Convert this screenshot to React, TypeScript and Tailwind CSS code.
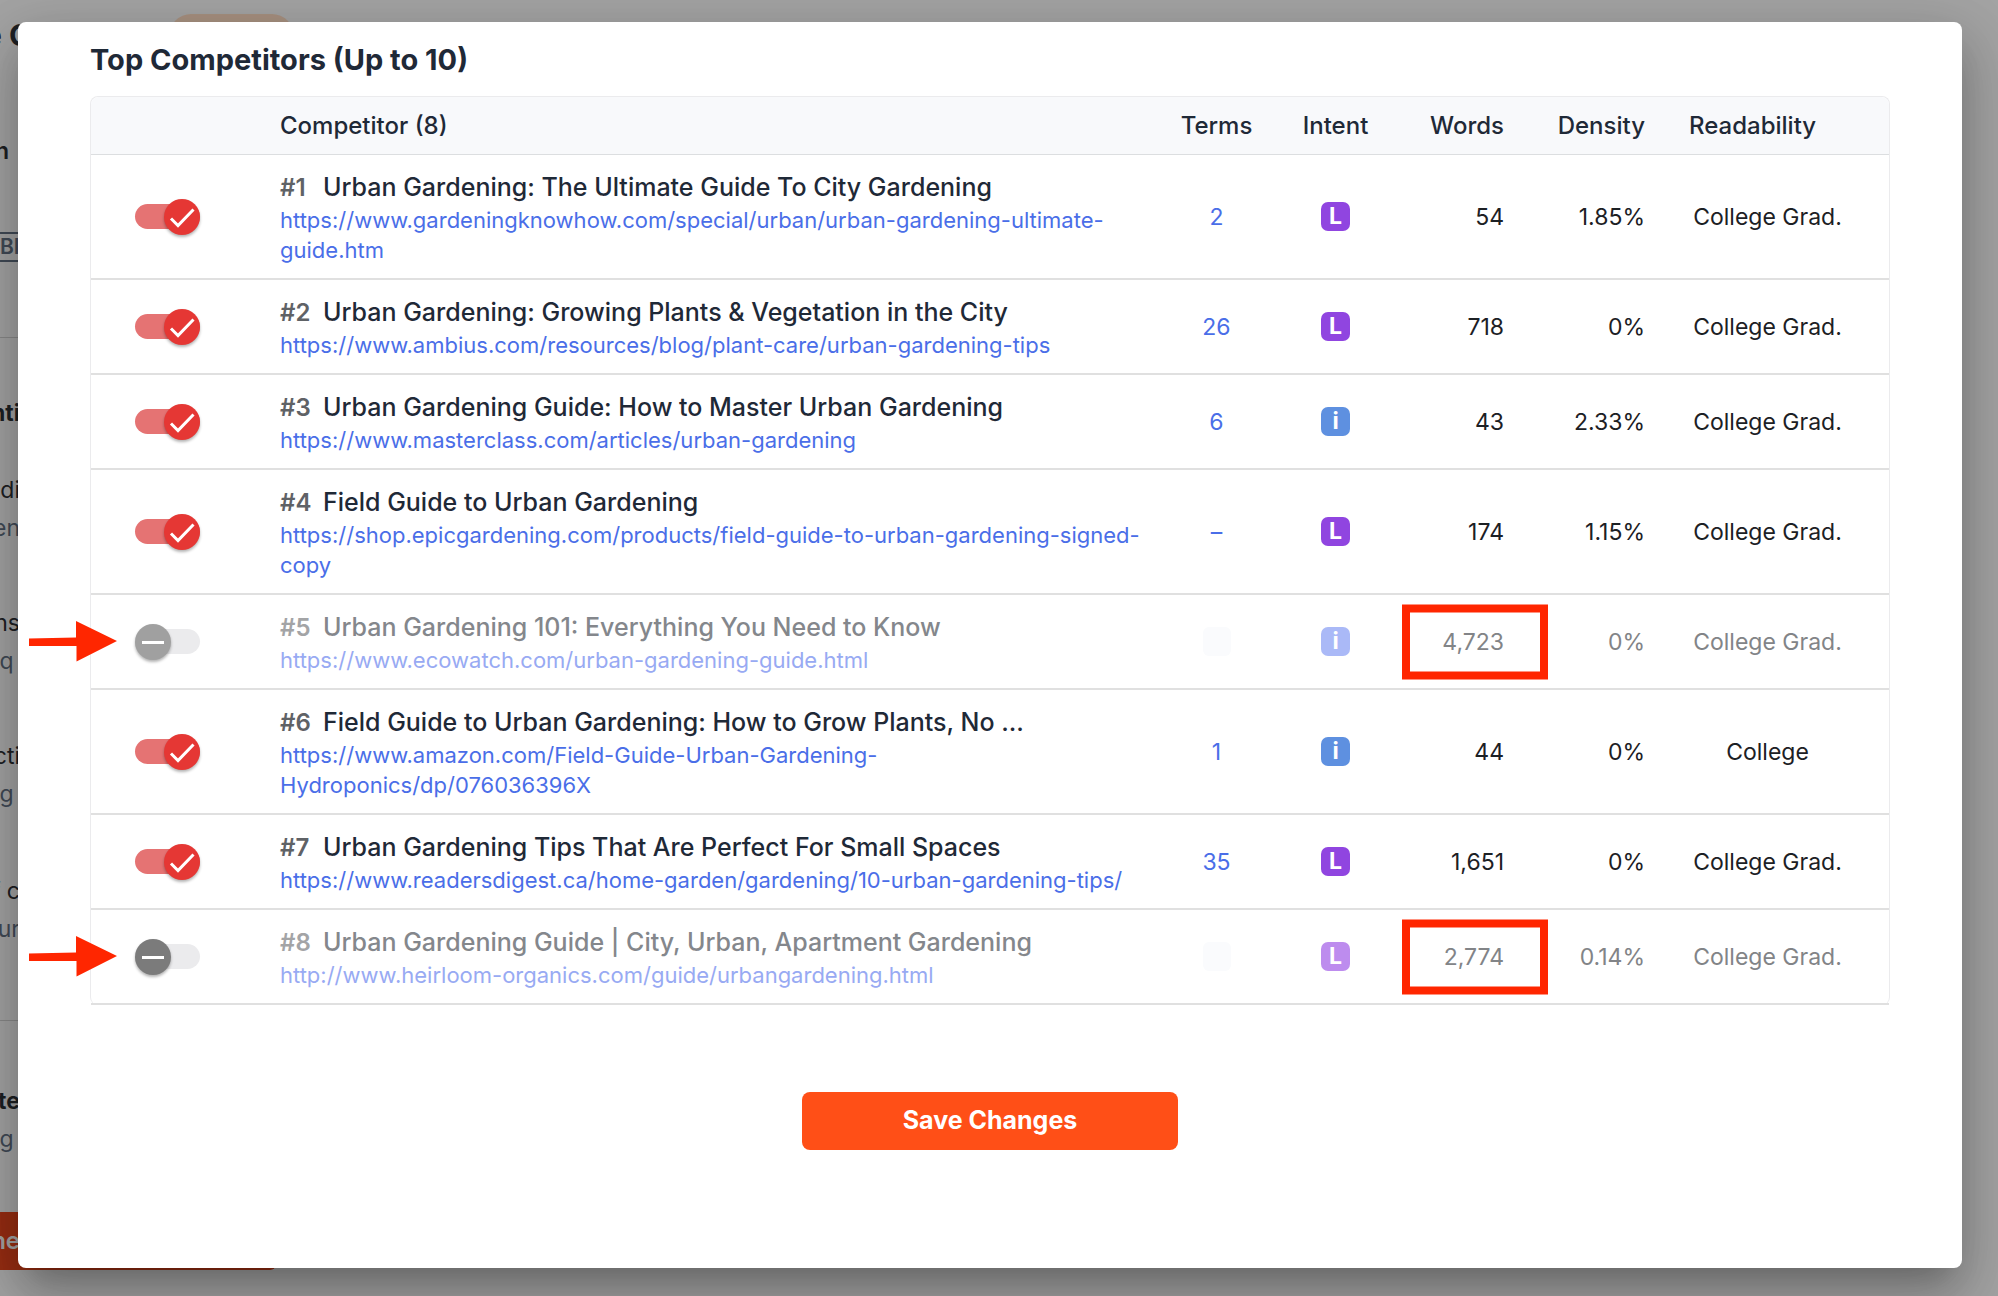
import { useState } from "react";

type Intent = "L" | "i";

interface Competitor {
  title: string;
  url: string;
  terms: string;
  intent: Intent;
  words: string;
  density: string;
  readability: string;
  enabled: boolean;
  marked?: boolean;
  focused?: boolean;
}

const COMPETITORS: Competitor[] = [
  { title: "Urban Gardening: The Ultimate Guide To City Gardening", url: "https://www.gardeningknowhow.com/special/urban/urban-gardening-ultimate-guide.htm", terms: "2", intent: "L", words: "54", density: "1.85%", readability: "College Grad.", enabled: true },
  { title: "Urban Gardening: Growing Plants & Vegetation in the City", url: "https://www.ambius.com/resources/blog/plant-care/urban-gardening-tips", terms: "26", intent: "L", words: "718", density: "0%", readability: "College Grad.", enabled: true },
  { title: "Urban Gardening Guide: How to Master Urban Gardening", url: "https://www.masterclass.com/articles/urban-gardening", terms: "6", intent: "i", words: "43", density: "2.33%", readability: "College Grad.", enabled: true },
  { title: "Field Guide to Urban Gardening", url: "https://shop.epicgardening.com/products/field-guide-to-urban-gardening-signed-copy", terms: "–", intent: "L", words: "174", density: "1.15%", readability: "College Grad.", enabled: true },
  { title: "Urban Gardening 101: Everything You Need to Know", url: "https://www.ecowatch.com/urban-gardening-guide.html", terms: "", intent: "i", words: "4,723", density: "0%", readability: "College Grad.", enabled: false, marked: true },
  { title: "Field Guide to Urban Gardening: How to Grow Plants, No ...", url: "https://www.amazon.com/Field-Guide-Urban-Gardening-Hydroponics/dp/076036396X", terms: "1", intent: "i", words: "44", density: "0%", readability: "College", enabled: true },
  { title: "Urban Gardening Tips That Are Perfect For Small Spaces", url: "https://www.readersdigest.ca/home-garden/gardening/10-urban-gardening-tips/", terms: "35", intent: "L", words: "1,651", density: "0%", readability: "College Grad.", enabled: true },
  { title: "Urban Gardening Guide | City, Urban, Apartment Gardening", url: "http://www.heirloom-organics.com/guide/urbangardening.html", terms: "", intent: "L", words: "2,774", density: "0.14%", readability: "College Grad.", enabled: false, marked: true, focused: true },
];

function Toggle({ label, checked, focused, onChange }: { label: string; checked: boolean; focused?: boolean; onChange: () => void }) {
  const knob = checked ? "right-0 bg-[#e53734]" : focused ? "left-0 bg-[#7b7b7b]" : "left-0 bg-[#a0a0a0]";
  return (
    <label className="relative ml-11 flex h-9 w-[65px] cursor-pointer items-center">
      <input type="checkbox" aria-label={label} checked={checked} onChange={onChange} className="h-[25px] w-full appearance-none rounded-full bg-[#ebebed] checked:bg-[#e57373]" />
      <span className={"pointer-events-none absolute top-0 flex size-9 items-center justify-center rounded-full shadow-[0_2px_3px_rgba(0,0,0,0.3)] " + knob}>
        <svg viewBox="0 0 36 36" className="size-9" fill="none" stroke="#fff">
          {checked ? <path d="M7 19.500l7 7L29.500 10.500" strokeWidth="3" /> : <path d="M7 18.500h22" strokeWidth="3" />}
        </svg>
      </span>
    </label>
  );
}

function IntentBadge({ intent, faded }: { intent: Intent; faded: boolean }) {
  const color = intent === "L" ? (faded ? "bg-[#bd8cee]" : "bg-[#9045e0]") : faded ? "bg-[#aab9f7]" : "bg-[#5e90e0]";
  return (
    <span className={"mx-auto flex size-[29px] items-center justify-center rounded-[7px] text-[23px] leading-none font-bold text-white " + color}>{intent}</span>
  );
}

function Arrow() {
  return (
    <svg viewBox="0 0 88 42" className="absolute top-1/2 -left-[62px] h-[42px] w-[88px] -translate-y-1/2" fill="#ff2600" aria-hidden="true">
      <path d="M0 17.500L47 16.500V0L88 20L47.500 40.500V25L0 25z" />
    </svg>
  );
}

function Row({ item, rank }: { item: Competitor; rank: number }) {
  const [enabled, setEnabled] = useState(item.enabled);
  const text = enabled ? "text-[#1c2024]" : "text-[#828487]";
  const cell = "border-b-2 border-[#e0e0e0] p-0 ";
  return (
    <tr className={text}>
      <td className={cell + "relative"}>
        {item.marked && <Arrow />}
        <Toggle label={`Include competitor ${rank}`} checked={enabled} focused={item.focused} onChange={() => setEnabled(!enabled)} />
      </td>
      <td className={cell + "pt-[15px] pr-2 pb-[13px]"}>
        <div className="flex text-[25px] leading-[35px] font-medium">
          <span className={"w-[43px] text-2xl leading-[35px] font-semibold " + (enabled ? "text-[#5f6266]" : "text-[#a3a4a6]")}>#{rank}</span>
          <span className={enabled ? "text-[#1f2937]" : "text-[#84878c]"}>{item.title}</span>
        </div>
        <a href={item.url} className={"block text-[22px] leading-[30px] " + (enabled ? "text-[#4a6ee8]" : "text-[#98aaf3]")}>{item.url}</a>
      </td>
      <td className={cell + "text-center " + (enabled ? "text-[#4a6ee8]" : "")}>
        {item.terms || <span className="mx-auto block h-[29px] w-7 rounded-md bg-[#fafbfd]" />}
      </td>
      <td className={cell}><IntentBadge intent={item.intent} faded={!enabled} /></td>
      <td className={cell + "relative text-right"}>
        {item.words}
        {item.marked && <span className="pointer-events-none absolute top-1/2 -right-11 h-[75px] w-[146px] -translate-y-1/2 border-8 border-[#ff2600]" />}
      </td>
      <td className={cell + "text-right"}>{item.density}</td>
      <td className={cell + "pr-[43px] pl-11 text-center"}>{item.readability}</td>
    </tr>
  );
}

const fragment = "flex w-5 justify-end whitespace-pre ";

function Backdrop() {
  return (
    <div className="absolute inset-0 overflow-hidden bg-[#a3a3a3] text-[23px] leading-[38px] text-[#1d2023]" aria-hidden="true">
      <div className="flex h-[132px] items-start pt-3.5">
        <span className="-ml-4 w-[185px] text-3xl leading-[42px] font-bold">e Grading</span>
        <span className="h-11 w-[125px] rounded-full bg-[#a6907f]" />
      </div>
      <div className="flex h-[100px] w-[9px] justify-end font-semibold">h</div>
      <div className="flex h-[30px] w-24 items-center border-y-2 border-[#414a56] text-[21px] font-semibold text-[#414a56]">BI</div>
      <div className="h-[75px]" />
      <div className="h-[57px] w-24 border-t border-[#888]" />
      <div className={fragment + "h-[77px] font-bold"}>nti</div>
      <div className={fragment}>di</div>
      <div className={fragment + "h-[95px] text-[#414a56]"}>en</div>
      <div className={fragment}>ns</div>
      <div className={fragment + "h-[95px] text-[#414a56]"}>q </div>
      <div className={fragment}>cti</div>
      <div className={fragment + "h-[97px] text-[#414a56]"}>g </div>
      <div className={fragment}>f c</div>
      <div className={fragment + "h-[110px] text-[#414a56]"}>ur</div>
      <div className="h-[62px] w-24 border-t border-[#888]" />
      <div className={fragment + "font-bold"}>te</div>
      <div className={fragment + "h-[92px] text-[#414a56]"}>g </div>
      <div className="flex h-[58px] w-[276px] items-center rounded-r-md bg-[#972d12]">
        <span className={fragment + "text-2xl font-semibold text-[#a3a3a3]"}>ne</span>
      </div>
    </div>
  );
}

export default function App() {
  return (
    <div className="relative isolate flex min-h-screen flex-col pt-[22px] pr-9 pb-7 pl-[18px] font-['Inter',sans-serif]">
      <Backdrop />
      <main role="dialog" aria-labelledby="competitors-title" className="relative flex-1 rounded-lg bg-white px-18 pt-[17px] shadow-[0_22px_30px_-14px_rgba(0,0,0,0.2),0_28px_60px_6px_rgba(0,0,0,0.14),0_18px_60px_8px_rgba(0,0,0,0.12)]">
        <h1 id="competitors-title" className="mb-[15px] text-[29px] leading-[42px] font-bold text-[#1f2937]">Top Competitors (Up to 10)</h1>
        <table className="w-full table-fixed border-separate border-spacing-0 rounded-lg border border-b-0 border-[#ebebed] text-[23px] leading-9">
          <thead className="text-2xl leading-9 text-[#1f2937]">
            <tr className="h-[58px] *:border-b *:border-[#dcdee0] *:bg-[#f8f9fb] *:p-0 *:font-medium">
              <th className="w-[189px] rounded-tl-lg"><span className="sr-only">Include</span></th>
              <th className="text-left">Competitor (8)</th>
              <th className="w-[119px]">Terms</th>
              <th className="w-[119px]">Intent</th>
              <th className="w-[109px] text-right">Words</th>
              <th className="w-[141px] text-right">Density</th>
              <th className="w-[244px] rounded-tr-lg text-left"><span className="ml-11">Readability</span></th>
            </tr>
          </thead>
          <tbody>
            {COMPETITORS.map((item, index) => (
              <Row key={item.url} item={item} rank={index + 1} />
            ))}
          </tbody>
        </table>
        <div className="mt-[87px] flex justify-center">
          <button type="button" className="h-[58px] w-[376px] rounded-lg bg-[#ff4f17] text-[25px] font-bold text-white">Save Changes</button>
        </div>
      </main>
    </div>
  );
}
